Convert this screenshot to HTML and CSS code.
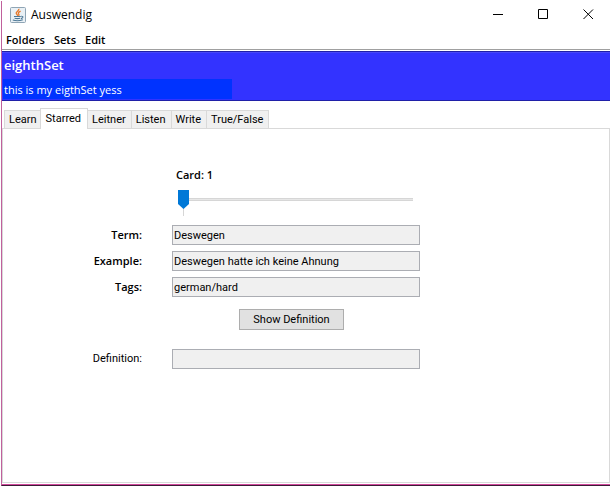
FILE: index.html
```html
<!DOCTYPE html>
<html lang="en">
<head>
<meta charset="utf-8">
<title>Auswendig</title>
<link rel="stylesheet" href="styles.css">
</head>
<body>
<div class="window">
  <header class="titlebar">
    <svg class="app-icon" width="16" height="16" viewBox="0 0 16 16" aria-hidden="true">
      <rect x=".5" y=".5" width="15" height="15" rx="1" fill="#e9f0f5" stroke="#8fa5b5"/>
      <path d="M8.8 1.8C9.8 3.6 5.6 4.6 6.2 6.4C6.5 7.3 7.6 7.8 7.8 8.8M10.6 4.2C8.4 5.2 7.8 6.2 8.8 7.2C9.3 7.8 9 8.4 8.6 8.8" fill="none" stroke="#e8792b" stroke-width="1.3"/>
      <path d="M4 9.5H10.8M4.6 11.2Q7.5 12 10.2 11.2M11.2 9.3Q13.6 9.2 12.6 10.6Q12 11.4 11 11.6M2.8 13Q7.5 14.6 12.8 12.8" fill="none" stroke="#4d7896" stroke-width="1.1"/>
    </svg>
    <h1 class="title">Auswendig</h1>
    <div class="controls">
      <button class="control" aria-label="Minimize"><svg width="11" height="11" viewBox="0 0 11 11"><path d="M0 5.5H10" stroke="#000"/></svg></button>
      <button class="control" aria-label="Maximize"><svg width="11" height="11" viewBox="0 0 11 11"><path d="M.5 .5H9.5V9.5H.5Z" fill="none" stroke="#000"/></svg></button>
      <button class="control" aria-label="Close"><svg width="11" height="11" viewBox="0 0 11 11"><path d="M.5 .5L10 10M10 .5L.5 10" stroke="#000"/></svg></button>
    </div>
  </header>
  <nav class="menubar">
    <button class="menu">Folders</button>
    <button class="menu">Sets</button>
    <button class="menu">Edit</button>
  </nav>
  <section class="banner">
    <h2 class="set-name">eighthSet</h2>
    <p class="set-text">this is my eigthSet yess</p>
  </section>
  <div class="tabs" role="tablist">
    <button class="tab" role="tab">Learn</button>
    <button class="tab selected" role="tab" aria-selected="true">Starred</button>
    <button class="tab" role="tab">Leitner</button>
    <button class="tab" role="tab">Listen</button>
    <button class="tab" role="tab">Write</button>
    <button class="tab" role="tab">True/False</button>
  </div>
  <main class="panel" role="tabpanel">
    <form class="form">
      <div class="card">
        <label class="strong" for="card">Card: 1</label>
        <input class="slider" id="card" type="range" min="1" max="10" value="1">
      </div>
      <label class="label strong" for="term">Term:</label>
      <input class="field" id="term" type="text" value="Deswegen" readonly>
      <label class="label strong" for="example">Example:</label>
      <input class="field" id="example" type="text" value="Deswegen hatte ich keine Ahnung" readonly>
      <label class="label strong" for="tags">Tags:</label>
      <input class="field" id="tags" type="text" value="german/hard" readonly>
      <button class="show" type="button">Show Definition</button>
      <label class="label" for="definition">Definition:</label>
      <input class="field" id="definition" type="text" readonly>
    </form>
  </main>
</div>
</body>
</html>
```
FILE: styles.css
```css
* {
  box-sizing: border-box;
}

body {
  margin: 0;
  padding: 1px 4px 2px 1px;
  height: 100vh;
  background: #fff;
  color: #000;
  font: 11px/16px Roboto, sans-serif;
}

h1, h2, p {
  margin: 0;
}

button, input {
  font: inherit;
  color: inherit;
  border-radius: 0;
}

.window {
  display: flex;
  flex-direction: column;
  height: 100%;
  border-left: 1px solid #c0609c;
  border-bottom: 1px solid #3a1c35;
  box-shadow: inset 0 -1px #d0489c;
  padding-bottom: 2px;
}

.titlebar,
.menu,
.banner,
.strong {
  font-family: "Open Sans", sans-serif;
}

.titlebar {
  display: flex;
  align-items: center;
  height: 28px;
  padding-left: 8px;
}

.title {
  margin-left: 5px;
  font-size: 12px;
  font-weight: 400;
}

.controls {
  display: flex;
  margin-left: auto;
}

.control {
  display: flex;
  align-items: center;
  justify-content: center;
  width: 45px;
  height: 28px;
  padding: 0 0 2px 2px;
  border: 0;
  background: none;
}

.menubar {
  display: flex;
  gap: 9px;
  height: 21px;
  padding: 3px 4px 1px;
  border-bottom: 1px solid #a0a0a0;
}

.menu {
  padding: 0;
  border: 0;
  background: none;
  font-size: 11px;
  font-weight: 600;
}

.banner {
  margin-top: 1px;
  height: 50px;
  padding: 3px 1px;
  border: 1px solid #2020a8;
  border-width: 1px 0;
  box-shadow: inset 0 1px #4848f8;
  background: #3333ff;
  color: #fff;
}

.set-name {
  height: 24px;
  padding-left: 1px;
  font-size: 13px;
  font-weight: 600;
  line-height: 20px;
}

.set-text {
  width: 229px;
  height: 20px;
  padding-left: 1px;
  background: #0033ff;
  font-size: 11px;
  line-height: 22px;
}

.tabs {
  display: flex;
  align-items: flex-end;
  height: 27px;
  padding-left: 2px;
}

.tab {
  height: 18px;
  margin-right: -1px;
  padding: 0 5px 0 4px;
  border: 1px solid #d9d9d9;
  border-bottom: 0;
  background: #f0f0f0;
  line-height: 18px;
}

.selected {
  position: relative;
  height: 21px;
  margin-bottom: -1px;
  margin-left: -2px;
  padding: 0 6px 0 5px;
  background: #fff;
  line-height: 18px;
}

.panel {
  flex: 1;
  padding: 38px 0;
  border: 1px solid #d9d9d9;
}

.form {
  display: grid;
  grid-template-columns: 139px 248px;
  column-gap: 30px;
  row-gap: 6px;
}

.card {
  grid-column: 2;
  display: flex;
  flex-direction: column;
  gap: 7px;
  padding-left: 4px;
  margin-bottom: 3px;
}

.strong {
  font-size: 11px;
  font-weight: 600;
}

.label {
  text-align: right;
  line-height: 20px;
}

.slider {
  appearance: none;
  width: 237px;
  height: 26px;
  margin: 0 0 0 2px;
  background:
    linear-gradient(#d6d6d6, #d6d6d6) 5px 0 / 1px 26px no-repeat,
    linear-gradient(#d6d6d6 1px, #e7e7e7 1px 2px, #d6d6d6 2px) 6px 8px / 229px 3px no-repeat;
}

.slider::-webkit-slider-runnable-track {
  height: 26px;
}

.slider::-webkit-slider-thumb {
  appearance: none;
  width: 11px;
  height: 19px;
  background: #0078d7;
  clip-path: polygon(0 0, 100% 0, 100% 14px, 50% 100%, 0 14px);
}

.field {
  width: 100%;
  height: 20px;
  padding: 0 1px;
  border: 1px solid #abadb3;
  background: #f0f0f0;
}

.show {
  grid-column: 2;
  width: 105px;
  height: 21px;
  margin: 6px 0 13px 67px;
  padding: 0;
  border: 1px solid #adadad;
  background: #e1e1e1;
}
```
